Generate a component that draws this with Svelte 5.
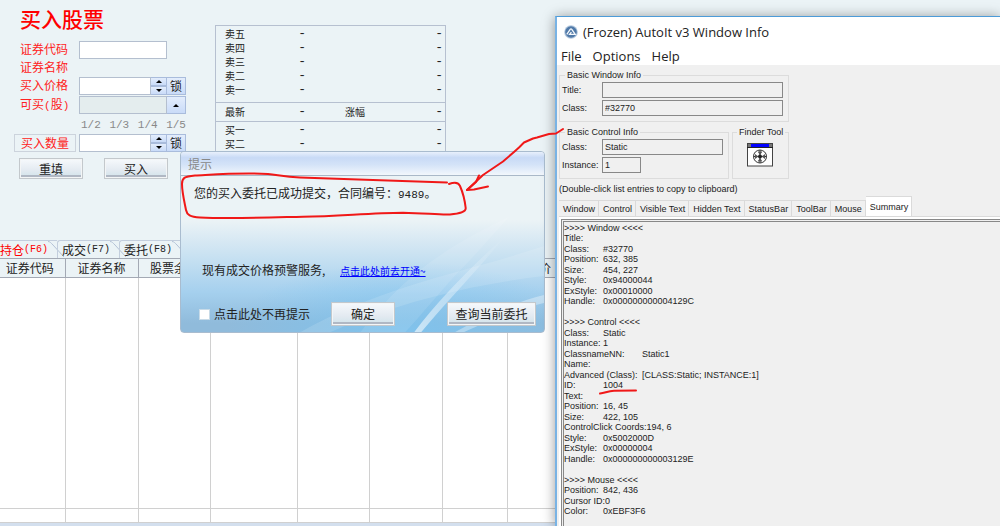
<script>
  const asks = ['卖五', '卖四', '卖三', '卖二', '卖一'];
  const bids = ['买一', '买二'];

  const orderTabs = [
    { name: '持仓', key: '(F6)' },
    { name: '成交', key: '(F7)' },
    { name: '委托', key: '(F8)' },
  ];

  const columns = [
    { title: '证券代码', width: 65 },
    { title: '证券名称', width: 73 },
    { title: '股票余额', width: 72 },
    { title: '', width: 87 },
    { title: '', width: 72 },
    { title: '', width: 73 },
    { title: '', width: 65 },
    { title: '成本价', width: 52 },
  ];

  const menus = ['File', 'Options', 'Help'];
  const infoTabs = ['Window', 'Control', 'Visible Text', 'Hidden Text', 'StatusBar', 'ToolBar', 'Mouse', 'Summary'];

  const summary = [
    { head: '>>>> Window <<<<' },
    { key: 'Title:' },
    { key: 'Class:', value: '#32770' },
    { key: 'Position:', value: '632, 385' },
    { key: 'Size:', value: '454, 227' },
    { key: 'Style:', value: '0x94000044' },
    { key: 'ExStyle:', value: '0x00010000' },
    { key: 'Handle:', value: '0x000000000004129C' },
    { head: '' },
    { head: '>>>> Control <<<<' },
    { key: 'Class:', value: 'Static' },
    { key: 'Instance:', value: '1' },
    { key: 'ClassnameNN:', value: 'Static1', wide: true },
    { key: 'Name:' },
    { key: 'Advanced (Class):', value: '[CLASS:Static; INSTANCE:1]', wide: true },
    { key: 'ID:', value: '1004' },
    { key: 'Text:' },
    { key: 'Position:', value: '16, 45' },
    { key: 'Size:', value: '422, 105' },
    { key: 'ControlClick Coords:', value: '194, 6', wide: true },
    { key: 'Style:', value: '0x5002000D' },
    { key: 'ExStyle:', value: '0x00000004' },
    { key: 'Handle:', value: '0x000000000003129E' },
    { head: '' },
    { head: '>>>> Mouse <<<<' },
    { key: 'Position:', value: '842, 436' },
    { key: 'Cursor ID:', value: '0' },
    { key: 'Color:', value: '0xEBF3F6' },
  ];

  let activeOrderTab = '持仓';
  let activeInfoTab = 'Summary';
  let code = '';
  let price = '';
  let available = '';
  let amount = '';
  let muted = false;
</script>

{#snippet spinner(label)}
  <div class="spinner">
    <button type="button" aria-label="{label} +">
      <svg width="6" height="3" viewBox="0 0 6 3"><path d="M0 3L3 0L6 3Z" /></svg>
    </button>
    <button type="button" aria-label="{label} -">
      <svg width="6" height="3" viewBox="0 0 6 3"><path d="M0 0L3 3L6 0Z" /></svg>
    </button>
  </div>
{/snippet}

<div class="desktop">
  <main class="trader">
    <div class="order">
      <form on:submit|preventDefault>
        <h1>买入股票</h1>
        <div class="row tight">
          <label for="code">证券代码</label>
          <input id="code" class="full" bind:value={code} />
        </div>
        <div class="row tight">
          <span class="label">证券名称</span>
        </div>
        <div class="row">
          <label for="price">买入价格</label>
          <input id="price" bind:value={price} />
          {@render spinner('买入价格')}
          <button type="button" class="side">锁</button>
        </div>
        <div class="row">
          <label for="available">可买<span class="num">(</span>股<span class="num">)</span></label>
          <input id="available" class="full readonly" readonly bind:value={available} />
          <button type="button" class="side" aria-label="可买">
            <svg width="6" height="3" viewBox="0 0 6 3"><path d="M0 3L3 0L6 3Z" /></svg>
          </button>
        </div>
        <div class="row fractions num">
          <span>1/2</span><span>1/3</span><span>1/4</span><span>1/5</span>
        </div>
        <div class="row">
          <label for="amount" class="boxed">买入数量</label>
          <input id="amount" bind:value={amount} />
          {@render spinner('买入数量')}
          <button type="button" class="side">锁</button>
        </div>
        <div class="actions">
          <button type="reset" class="push">重填</button>
          <button type="submit" class="push">买入</button>
        </div>
      </form>

      <table class="quotes">
        <tbody>
          {#each asks as name}
            <tr><th>{name}</th><td>-</td><td></td><td>-</td></tr>
          {/each}
        </tbody>
        <tbody class="last">
          <tr><th>最新</th><td>-</td><td class="mid">涨幅</td><td>-</td></tr>
        </tbody>
        <tbody>
          {#each bids as name}
            <tr><th>{name}</th><td>-</td><td></td><td>-</td></tr>
          {/each}
        </tbody>
      </table>
    </div>

    <div class="order-tabs">
      {#each orderTabs as tab}
        <button class:active={activeOrderTab === tab.name} on:click={() => (activeOrderTab = tab.name)}>
          {tab.name}<span class="num">{tab.key}</span>
          <svg width="16" height="18" viewBox="0 0 16 18"><path d="M0 0.5C2 0.5 3 2 5 4L16 16" /></svg>
        </button>
      {/each}
    </div>

    <div class="grid-wrap">
      <table class="holdings">
        <colgroup>
          {#each columns as col}
            <col style="width: {col.width}px" />
          {/each}
          <col />
        </colgroup>
        <thead>
          <tr>
            {#each columns as col}
              <th>{col.title}</th>
            {/each}
            <th></th>
          </tr>
        </thead>
        <tbody>
          <tr>
            {#each columns as col}
              <td></td>
            {/each}
            <td></td>
          </tr>
          <tr class="total">
            {#each columns as col}
              <td></td>
            {/each}
            <td></td>
          </tr>
        </tbody>
      </table>
    </div>
  </main>

  <section class="dialog">
    <svg class="streaks" viewBox="0 0 364 156" preserveAspectRatio="none">
      <defs>
        <linearGradient id="glow" x1="0" y1="1" x2="1" y2="0">
          <stop offset="0" stop-color="#fff" stop-opacity="0.6" />
          <stop offset="1" stop-color="#fff" stop-opacity="0" />
        </linearGradient>
        <radialGradient id="deep" cx="0.62" cy="1.05" r="0.5">
          <stop offset="0" stop-color="#7cc4f0" stop-opacity="0.9" />
          <stop offset="1" stop-color="#7cc4f0" stop-opacity="0" />
        </radialGradient>
      </defs>
      <rect width="364" height="156" fill="url(#deep)" />
      <path d="M120 156C200 110 290 95 364 70V100C280 110 210 130 150 156Z" fill="#fff" opacity="0.13" />
      <path d="M180 156C230 90 280 65 330 40L290 84C262 112 245 135 225 156Z" fill="#fff" opacity="0.1" />
      <path d="M234 156C258 124 290 92 325 60C296 96 266 126 241 156Z" fill="url(#glow)" />
      <path d="M275 156C300 142 335 126 364 119V127C335 134 305 146 284 156Z" fill="#fff" opacity="0.35" />
    </svg>
    <header>提示</header>
    <p class="message">您的买入委托已成功提交，合同编号：<span class="num">9489</span>。</p>
    <p class="promo">现有成交价格预警服务, <a href="#open">点击此处前去开通~</a></p>
    <footer>
      <label><input type="checkbox" bind:checked={muted} />点击此处不再提示</label>
      <button class="push ok">确定</button>
      <button class="push query">查询当前委托</button>
    </footer>
  </section>

  <section class="autoit">
    <header>
      <svg width="14" height="14" viewBox="0 0 14 14">
        <circle cx="7" cy="7" r="6.8" fill="#b4c8de" />
        <circle cx="7" cy="7" r="5.8" fill="#5079a8" />
        <path d="M2.8 9.4L6.2 4.4Q7 3.4 7.8 4.4L11.2 9.4H5.6L7.4 7.2" fill="none" stroke="#f4f8fc" stroke-width="1.3" />
      </svg>
      <h2>(Frozen) AutoIt v3 Window Info</h2>
    </header>
    <nav>
      {#each menus as menu}
        <button>{menu}</button>
      {/each}
    </nav>

    <div class="info">
      <fieldset class="basic-window">
        <legend>Basic Window Info</legend>
        <div class="field">
          <label for="win-title">Title:</label>
          <input id="win-title" readonly value="" />
        </div>
        <div class="field">
          <label for="win-class">Class:</label>
          <input id="win-class" readonly value="#32770" />
        </div>
      </fieldset>
      <div class="pair">
        <fieldset class="basic-control">
          <legend>Basic Control Info</legend>
          <div class="field">
            <label for="ctl-class">Class:</label>
            <input id="ctl-class" readonly value="Static" />
          </div>
          <div class="field">
            <label for="ctl-instance">Instance:</label>
            <input id="ctl-instance" class="short" readonly value="1" />
          </div>
        </fieldset>
        <fieldset class="finder">
          <legend>Finder Tool</legend>
          <svg width="26" height="24" viewBox="0 0 26 24">
            <rect x="0.5" y="0.5" width="25" height="22.5" fill="#fff" stroke="#444" />
            <rect x="1" y="1" width="24" height="3" fill="#777" />
            <rect x="4" y="1" width="18" height="3" fill="#00f" />
            <path d="M0 4.5H26" stroke="#222" />
            <circle cx="13" cy="13.5" r="6.5" fill="none" stroke="#333" />
            <path d="M13 7V20M6.5 13.5H19.5" stroke="#333" />
            <path d="M10.5 8.500H15.500L13 12ZM10.500 18.500H15.500L13 15ZM8 11V16L11.500 13.500ZM18 11V16L14.500 13.500Z" fill="#555" />
            <circle cx="13" cy="13.500" r="2" fill="#222" />
          </svg>
        </fieldset>
      </div>
      <p class="hint">(Double-click list entries to copy to clipboard)</p>
      <div class="info-tabs">
        {#each infoTabs as tab}
          <button class:active={activeInfoTab === tab} on:click={() => (activeInfoTab = tab)}>{tab}</button>
        {/each}
      </div>
      <div class="panel">
        <div class="summary">
          {#each summary as line}
            <div class="line">
              {#if line.key}
                <span class="key" class:wide={line.wide}>{line.key}</span><span>{line.value ?? ''}</span>
              {:else}
                {line.head}
              {/if}
            </div>
          {/each}
        </div>
      </div>
    </div>
  </section>

  <!-- red pen marks -->
  <svg class="marks" width="1000" height="526" viewBox="0 0 1000 526">
    <path d="M447 182.500C400 181 340 179 300 177.500C285 177 278 175 268 174C240 172.500 215 174.500 195 175.500C184 176.500 182 178 182 184C182 192 184 200 186 210C187 215 190 217 200 217.500C230 219 270 217.500 303 216.700C340 216 370 213 403 212.700C425 213 438 215 450 214.500C460 213.500 466 212 465.700 208C465 202 464 195 460 186C458 181 453 182.500 449 184" />
    <path d="M563 129L556 133.500L549 134L537 137.500L533 138.500L524 142.500L519 147.500L514 152L503 161.500L483 175L467 190" />
    <path d="M479 175.500L476 182L467 190L474 189.500L488 186.500" />
    <path d="M600 393.500C606 392.500 608 391 614 390.800L636 390.500" />
  </svg>
</div>

<style>
  :global(body) {
    background: #ebf3f6;
  }

  .desktop {
    position: relative;
    height: 100vh;
    overflow: hidden;
    font-family: "Noto Sans CJK SC", sans-serif;
    font-size: 12px;
    line-height: 16px;
    color: #222;
  }

  .desktop :is(button, input) {
    box-sizing: border-box;
    margin: 0;
    padding: 0;
    font: inherit;
    color: inherit;
    border-radius: 0;
  }

  h1, h2, p {
    margin: 0;
  }

  svg {
    display: block;
  }

  .num {
    font-family: "Liberation Mono", monospace;
    font-size: 11px;
  }

  /* trading client */
  .trader {
    display: flex;
    flex-direction: column;
    height: 100%;
    background: #ebf3f6;
  }

  .order {
    display: flex;
    align-items: flex-start;
    gap: 29px;
    height: 240px;
  }

  form {
    width: 172px;
    padding: 8px 0 0 14px;
  }

  h1 {
    padding-left: 6px;
    margin-bottom: 9px;
    font-family: "Liberation Serif", "Noto Sans CJK SC", serif;
    font-size: 21px;
    line-height: 24px;
    font-weight: 500;
    color: #f00;
  }

  .row {
    display: flex;
    height: 18px;
    margin-bottom: 1px;
  }

  .tight {
    margin-bottom: 0;
  }

  .row label, .label {
    box-sizing: border-box;
    width: 62px;
    margin-right: 3px;
    padding-left: 6px;
    line-height: 16px;
    color: #f22;
    white-space: nowrap;
  }

  .row .boxed {
    border: 1px solid #ccd3dc;
  }

  .row input {
    width: 72px;
    border: 1px solid #b4bfcf;
    background: #fff;
  }

  .row .full {
    width: 88px;
  }

  .row .readonly {
    background: #e4edee;
  }

  .spinner {
    display: flex;
    flex-direction: column;
    width: 16px;
  }

  .spinner button, .side {
    display: grid;
    place-items: center;
    flex: 1;
    border: 1px solid #a9bcdc;
    border-left: 0;
    background: linear-gradient(#e3edfc, #c9dbf8);
  }

  .order .side {
    flex: none;
    width: 19px;
    line-height: 16px;
  }

  .fractions {
    justify-content: space-between;
    padding-left: 67px;
    color: #888;
    line-height: 20px;
  }

  .actions {
    display: flex;
    gap: 21px;
    padding: 5px 0 0 5px;
  }

  .desktop .push {
    width: 64px;
    height: 21px;
    border: 1px solid #c3c8cc;
    outline: 1px solid #f3f5f6;
    outline-offset: -2px;
    background: linear-gradient(#f6f9fc, #e3eaf1 60%, #cfe3ea);
    box-shadow: inset 0 -2px 0 1px #b0b8c4;
    line-height: 16px;
  }

  .quotes {
    width: 231px;
    margin-top: 25px;
    border: 1px solid #b6c0d0;
    border-collapse: collapse;
    font-size: 10px;
    line-height: 14px;
  }

  .quotes tbody {
    border-top: 1px solid #b6c0d0;
  }

  .quotes tr:first-child > * {
    padding-top: 1px;
  }

  .quotes tr:last-child > * {
    padding-bottom: 5px;
  }

  .quotes .last tr > * {
    padding-top: 2px;
    padding-bottom: 2px;
  }

  .quotes th {
    width: 50px;
    padding: 0 0 0 9px;
    font-weight: 400;
    text-align: left;
  }

  .quotes td {
    padding: 0 2px 0 0;
    font-family: "Liberation Mono", monospace;
    font-size: 13px;
    text-align: right;
  }

  .quotes td:nth-child(2) {
    width: 31px;
  }

  .quotes .mid {
    padding-left: 37px;
    font-family: "Noto Sans CJK SC", sans-serif;
    font-size: 10px;
    text-align: left;
  }

  .order-tabs {
    display: flex;
    height: 18px;
  }

  .order-tabs button {
    display: flex;
    align-items: center;
    height: 18px;
    padding-left: 4px;
    border: 0;
    border-top: 1px solid #c3cedd;
    border-left: 1px solid #c3cedd;
    border-radius: 3px 0 0 0;
    background: none;
    line-height: 16px;
    white-space: nowrap;
  }

  .desktop .order-tabs button {
    padding-left: 4px;
  }

  .desktop .order-tabs button:first-child {
    margin-left: -5px;
  }

  .order-tabs .num {
    font-size: 10px;
  }

  .desktop .order-tabs .active {
    color: #f00;
  }

  .order-tabs button svg {
    margin-right: -7px;
    fill: none;
    stroke: #b4c2d6;
  }

  .grid-wrap {
    flex: 1;
    min-height: 0;
    border-bottom: 3px solid #d3dfee;
  }

  .holdings {
    width: 100%;
    height: 100%;
    table-layout: fixed;
    border-collapse: collapse;
    background: #fff;
  }

  .holdings th {
    height: 18px;
    padding: 0;
    border: 1px solid #a3a9b4;
    border-left: 0;
    background: #ebf3f6;
    font-weight: 400;
    white-space: nowrap;
  }

  .holdings th:first-child {
    padding-right: 5px;
  }

  .holdings td {
    padding: 0;
    border-right: 1px solid #d0d0d0;
    border-bottom: 1px solid #d0d0d0;
  }

  .holdings .total td {
    height: 13px;
  }

  /* message box */
  .dialog {
    position: absolute;
    left: 180px;
    top: 151px;
    box-sizing: border-box;
    width: 365px;
    border: 1px solid #a9bccf;
    border-radius: 4px;
    overflow: hidden;
    background: linear-gradient(#ebf3f6 38%, #d6e8f3 50%, #a5d0ee 78%, #90bbdb 95%);
  }

  .streaks {
    position: absolute;
    left: 0;
    bottom: 0;
    width: 100%;
    height: 156px;
  }

  .dialog > :not(.streaks) {
    position: relative;
  }

  .dialog header {
    padding: 4px 7px 3px;
    border-bottom: 1px solid #a9b8c8;
    background: linear-gradient(#e8f0fc, #c8daf6 25%, #d4e3f8 55%, #f2f7fc);
    color: #888;
  }

  .message {
    padding: 9px 13px 0;
  }

  .promo {
    padding: 59px 21px 0;
  }

  .promo a {
    margin-left: 12px;
    font-size: 10px;
    color: #00f;
  }

  footer {
    display: flex;
    align-items: center;
    padding: 23px 8px 6px 18px;
  }

  footer label {
    display: flex;
    align-items: center;
    gap: 4px;
    white-space: nowrap;
  }

  footer input {
    appearance: none;
    width: 11px;
    height: 11px;
    border: 1px solid #c8dbe8;
    background: #fff;
  }

  .desktop .ok {
    height: 24px;
    margin-left: 21px;
  }

  .desktop .query {
    width: 89px;
    height: 24px;
    margin-left: auto;
  }

  /* inspector window */
  .autoit {
    position: absolute;
    left: 555px;
    top: 16px;
    right: 0;
    bottom: 0;
    display: flex;
    flex-direction: column;
    border-top: 1px solid #4c9bd8;
    border-left: 2px solid #79b3e4;
    background: #fff;
    box-shadow: 0 1px 12px rgba(0, 0, 0, 0.4);
    font-family: "Liberation Sans", Arial, sans-serif;
    font-size: 9px;
    line-height: 10px;
  }

  .autoit header {
    display: flex;
    align-items: center;
    gap: 5px;
    height: 29px;
    padding-left: 7px;
  }

  h2 {
    font-family: "Open Sans", sans-serif;
    font-size: 13px;
    line-height: 18px;
    font-weight: 400;
    white-space: nowrap;
  }

  nav {
    display: flex;
    gap: 11px;
    height: 19px;
    padding-left: 4px;
  }

  .desktop nav button {
    border: 0;
    background: none;
    font-family: "Open Sans", sans-serif;
    font-size: 13px;
    line-height: 18px;
  }

  .info {
    flex: 1;
    display: flex;
    flex-direction: column;
    min-height: 0;
    padding: 5px 0 0 2px;
    background: #f0f0f0;
  }

  fieldset {
    box-sizing: border-box;
    min-width: 0;
    height: 52px;
    margin: 0;
    padding: 2px 5px 0 2px;
    border: 1px solid #dcdcdc;
  }

  legend {
    margin-left: 3px;
    padding: 0 2px;
    white-space: nowrap;
  }

  .basic-window {
    width: 230px;
  }

  .pair {
    display: flex;
    gap: 3px;
    margin-top: 5px;
  }

  .basic-control {
    width: 170px;
  }

  .finder {
    width: 57px;
    padding-right: 0;
  }

  .finder legend {
    margin-left: 2px;
  }

  .finder svg {
    margin: 4px 0 0 12px;
  }

  .field {
    display: flex;
    align-items: flex-start;
    margin-bottom: 2px;
  }

  .field label {
    flex: none;
    width: 40px;
    line-height: 16px;
  }

  .desktop .field input {
    flex: 1;
    min-width: 0;
    height: 16px;
    padding-left: 2px;
    border: 1px solid #888;
    background: #f0f0f0;
  }

  .desktop .field .short {
    flex: none;
    width: 39px;
  }

  .hint {
    margin-top: 5px;
  }

  .info-tabs {
    display: flex;
    align-items: flex-end;
    margin-top: 2px;
  }

  .desktop .info-tabs button {
    height: 16px;
    padding: 0 3px 0 4px;
    border: 1px solid #dadada;
    border-width: 1px 1px 0 0;
    background: #f0f0f0;
    white-space: nowrap;
  }

  .desktop .info-tabs .active {
    height: 20px;
    background: #fff;
  }

  .panel {
    flex: 1;
    min-height: 0;
    padding: 2px 0 0 2px;
    border-top: 1px solid #dadada;
    background: #fff;
  }

  .summary {
    box-sizing: border-box;
    height: 100%;
    padding: 1px 0 0 0;
    overflow: hidden;
    border: 3px double #888;
    border-right: 0;
    border-bottom: 0;
    background: #f0f0f0;
  }

  .line {
    display: flex;
    height: 10px;
    white-space: nowrap;
  }

  .line:nth-child(even) {
    height: 11px;
  }

  .key {
    flex: none;
    min-width: 39px;
  }

  .key.wide {
    min-width: 78px;
  }

  .marks {
    position: absolute;
    left: 0;
    top: 0;
    fill: none;
    stroke: #f01818;
    stroke-width: 2;
    stroke-linecap: round;
    stroke-linejoin: round;
    pointer-events: none;
  }
</style>
